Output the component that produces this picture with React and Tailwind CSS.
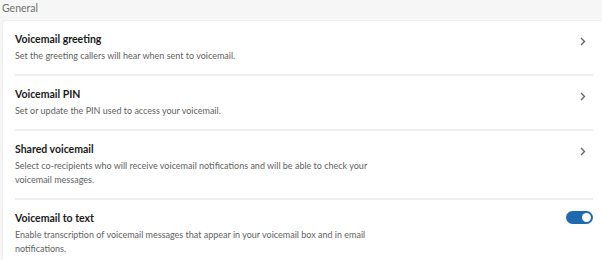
import React, { useState } from 'react';

const rows = [
  {
    title: 'Voicemail greeting',
    desc: 'Set the greeting callers will hear when sent to voicemail.',
    type: 'link',
  },
  {
    title: 'Voicemail PIN',
    desc: 'Set or update the PIN used to access your voicemail.',
    type: 'link',
  },
  {
    title: 'Shared voicemail',
    desc: 'Select co-recipients who will receive voicemail notifications and will be able to check your voicemail messages.',
    type: 'link',
  },
  {
    title: 'Voicemail to text',
    desc: 'Enable transcription of voicemail messages that appear in your voicemail box and in email notifications.',
    type: 'toggle',
  },
];

const Chevron = () => (
  <svg width="6" height="9" viewBox="0 0 6 9" className="mt-[6px] mr-[7px]">
    <path d="M1 1l3.5 3.5L1 8" fill="none" stroke="#666" strokeWidth="1.4" />
  </svg>
);

const Toggle = ({ on, onChange }) => (
  <button
    onClick={onChange}
    className={`mt-[1px] w-[27px] h-[13px] rounded-full flex items-center px-[2px] ${on ? 'bg-[#1d6aae] justify-end' : 'bg-gray-400 justify-start'}`}
  >
    <span className="w-[9px] h-[9px] rounded-full bg-white" />
  </button>
);

const App = () => {
  const [textOn, setTextOn] = useState(true);

  return (
    <div className="min-h-screen bg-[#f6f6f6] font-['Lato',sans-serif] h-[260px] overflow-hidden">
      <div className="pl-[2px] h-[20px] text-[10.5px] leading-[17px] text-[#6f6f6f]">General</div>
      <div className="ml-[2px] bg-white rounded-tl-[4px] border-t border-l border-[#eeeeee] pl-[12px] pr-[9px]">
        {rows.map((row, i) => (
          <div
            key={row.title}
            className={`flex items-start justify-between pt-[10px] pb-[11px] ${i < rows.length - 1 ? 'border-b-2 border-[#f0f0f0]' : ''}`}
          >
            <div className="max-w-[360px]">
              <div className="text-[10.5px] leading-[16px] font-bold text-[#1a1a1a]">{row.title}</div>
              <div className="mt-[2px] text-[9px] leading-[14px] text-[#5f5f5f]">{row.desc}</div>
            </div>
            {row.type === 'link' ? <Chevron /> : <Toggle on={textOn} onChange={() => setTextOn(!textOn)} />}
          </div>
        ))}
      </div>
    </div>
  );
};

export default App;
